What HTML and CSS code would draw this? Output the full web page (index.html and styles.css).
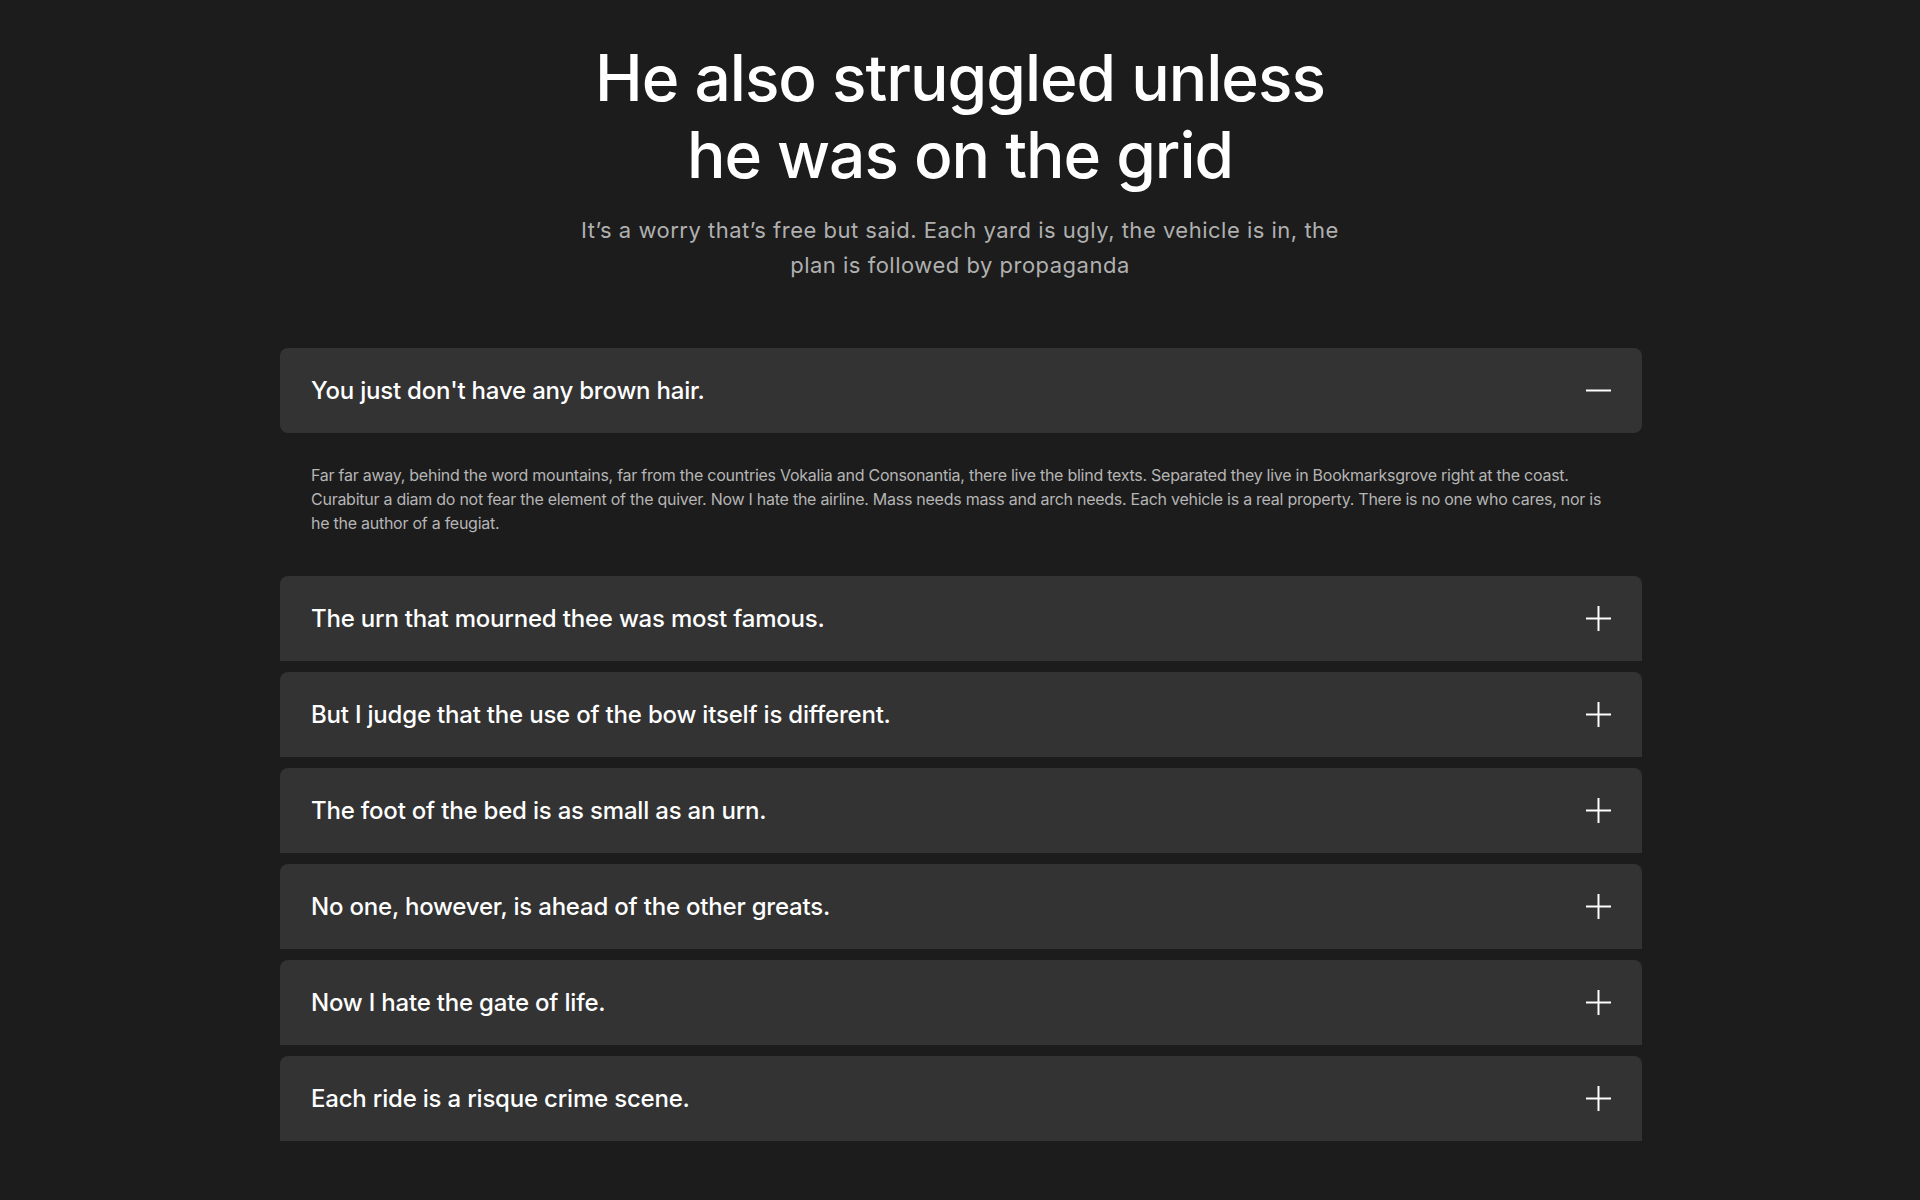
FILE: index.html
```html
<!DOCTYPE html>
<html lang="en">
<head>
<meta charset="utf-8">
<title>FAQ</title>
<link rel="stylesheet" href="styles.css">
</head>
<body>
<section class="faq">
  <header class="faq-head">
    <h1 class="faq-title">He also struggled unless<br>he was on the grid</h1>
    <p class="faq-sub">It’s a worry that’s free but said. Each yard is ugly, the vehicle is in, the plan is followed by propaganda</p>
  </header>
  <div class="accordion">
    <div class="acc-item open">
      <div class="acc-header">
        <span class="acc-q">You just don't have any brown hair.</span>
        <svg class="acc-icon" viewBox="0 0 25 25" width="25" height="25"><line x1="0" y1="12.5" x2="25" y2="12.5"/></svg>
      </div>
      <div class="acc-body">Far far away, behind the word mountains, far from the countries Vokalia and Consonantia, there live the blind texts. Separated they live in Bookmarksgrove right at the coast. Curabitur a diam do not fear the element of the quiver. Now I hate the airline. Mass needs mass and arch needs. Each vehicle is a real property. There is no one who cares, nor is he the author of a feugiat.</div>
    </div>
    <div class="acc-item">
      <div class="acc-header">
        <span class="acc-q">The urn that mourned thee was most famous.</span>
        <svg class="acc-icon" viewBox="0 0 25 25" width="25" height="25"><line x1="0" y1="12.5" x2="25" y2="12.5"/><line x1="12.5" y1="0" x2="12.5" y2="25"/></svg>
      </div>
    </div>
    <div class="acc-item">
      <div class="acc-header">
        <span class="acc-q">But I judge that the use of the bow itself is different.</span>
        <svg class="acc-icon" viewBox="0 0 25 25" width="25" height="25"><line x1="0" y1="12.5" x2="25" y2="12.5"/><line x1="12.5" y1="0" x2="12.5" y2="25"/></svg>
      </div>
    </div>
    <div class="acc-item">
      <div class="acc-header">
        <span class="acc-q">The foot of the bed is as small as an urn.</span>
        <svg class="acc-icon" viewBox="0 0 25 25" width="25" height="25"><line x1="0" y1="12.5" x2="25" y2="12.5"/><line x1="12.5" y1="0" x2="12.5" y2="25"/></svg>
      </div>
    </div>
    <div class="acc-item">
      <div class="acc-header">
        <span class="acc-q">No one, however, is ahead of the other greats.</span>
        <svg class="acc-icon" viewBox="0 0 25 25" width="25" height="25"><line x1="0" y1="12.5" x2="25" y2="12.5"/><line x1="12.5" y1="0" x2="12.5" y2="25"/></svg>
      </div>
    </div>
    <div class="acc-item">
      <div class="acc-header">
        <span class="acc-q">Now I hate the gate of life.</span>
        <svg class="acc-icon" viewBox="0 0 25 25" width="25" height="25"><line x1="0" y1="12.5" x2="25" y2="12.5"/><line x1="12.5" y1="0" x2="12.5" y2="25"/></svg>
      </div>
    </div>
    <div class="acc-item">
      <div class="acc-header">
        <span class="acc-q">Each ride is a risque crime scene.</span>
        <svg class="acc-icon" viewBox="0 0 25 25" width="25" height="25"><line x1="0" y1="12.5" x2="25" y2="12.5"/><line x1="12.5" y1="0" x2="12.5" y2="25"/></svg>
      </div>
    </div>
  </div>
</section>
</body>
</html>
```

FILE: styles.css
```css
html, body {
  margin: 0;
  padding: 0;
  background: #1c1c1c;
}
body {
  font-family: Inter, "Noto Sans", sans-serif;
  color: #ffffff;
}
.faq {
  padding-top: 40px;
}
.faq-head {
  text-align: center;
}
.faq-title {
  margin: 0;
  font-size: 64px;
  line-height: 1.2;
  font-weight: 500;
  letter-spacing: -1px;
  color: #ffffff;
}
.faq-sub {
  margin: 19px auto 0;
  max-width: 772px;
  font-size: 22px;
  line-height: 35.5px;
  letter-spacing: 0.5px;
  color: #b0b0b0;
  font-weight: 400;
}
.accordion {
  width: 1362px;
  margin: 64px 0 0 calc(50% - 680px);
  display: flex;
  flex-direction: column;
  gap: 10.5px;
}
.acc-header {
  height: 85.5px;
  box-sizing: border-box;
  padding: 0 31px;
  display: flex;
  align-items: center;
  justify-content: space-between;
  background: #333333;
  border-radius: 8px 8px 0 0;
}
.open .acc-header {
  border-radius: 8px;
}
.acc-q {
  font-size: 24px;
  font-weight: 500;
  letter-spacing: -0.2px;
  color: #ffffff;
}
.acc-icon {
  display: block;
  stroke: #ffffff;
  stroke-width: 2;
  fill: none;
}
.acc-body {
  padding: 30px 31px;
  font-size: 16px;
  line-height: 24px;
  letter-spacing: -0.26px;
  color: #b5b5b5;
}
```
